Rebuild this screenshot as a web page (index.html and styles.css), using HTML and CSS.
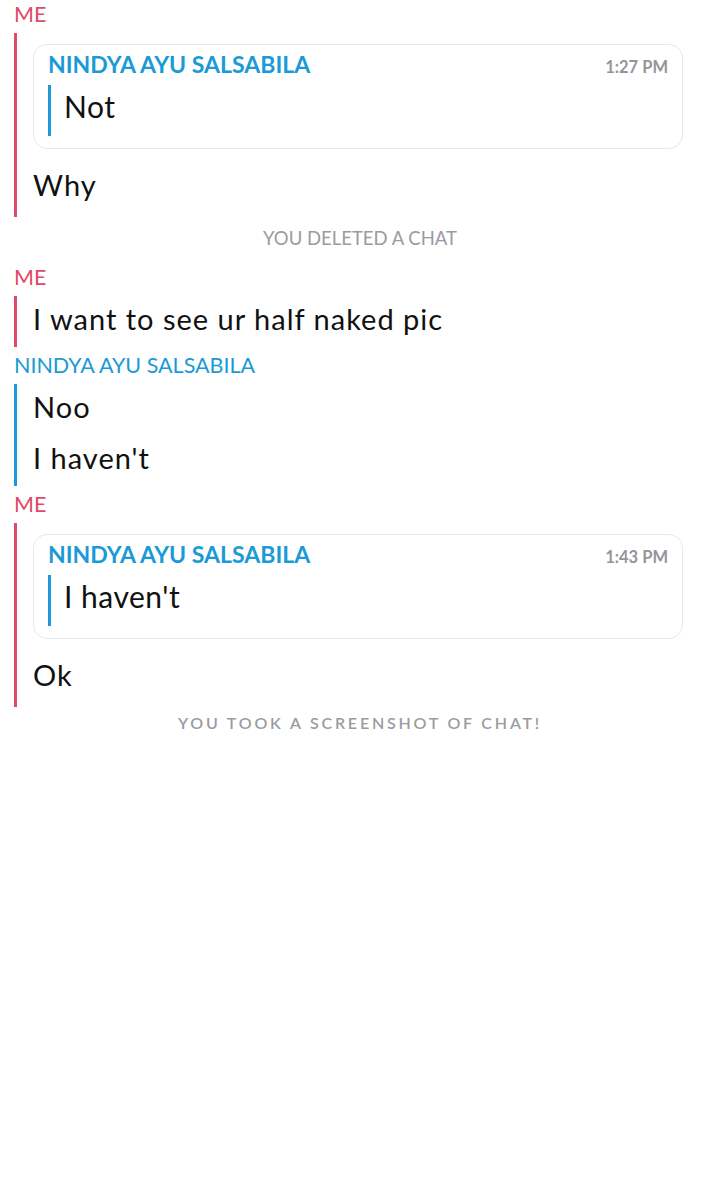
FILE: index.html
```html
<!DOCTYPE html>
<html lang="en">
<head>
    <meta charset="UTF-8">
    <meta name="viewport" content="width=device-width, initial-scale=1.0">
    <title>Chat</title>
    <link rel="stylesheet" href="styles.css">
</head>
<body>
    <div class="chat">
        <!-- Me, replying to a quote -->
        <div class="sender me">ME</div>
        <div class="thread me has-quote">
            <div class="quote-card">
                <div class="quote-head">
                    <span class="quote-name">NINDYA AYU SALSABILA</span>
                    <span class="quote-time">1:27 PM</span>
                </div>
                <div class="quote-text">Not</div>
            </div>
            <div class="msg">Why</div>
        </div>

        <div class="notice">YOU DELETED A CHAT</div>

        <div class="sender me">ME</div>
        <div class="thread me">
            <div class="msg">I want to see ur half naked pic</div>
        </div>

        <div class="sender them">NINDYA AYU SALSABILA</div>
        <div class="thread them">
            <div class="msg">Noo</div>
            <div class="msg">I haven't</div>
        </div>

        <div class="sender me">ME</div>
        <div class="thread me has-quote">
            <div class="quote-card">
                <div class="quote-head">
                    <span class="quote-name">NINDYA AYU SALSABILA</span>
                    <span class="quote-time">1:43 PM</span>
                </div>
                <div class="quote-text">I haven't</div>
            </div>
            <div class="msg">Ok</div>
        </div>

        <div class="notice screenshot">YOU TOOK A SCREENSHOT OF CHAT!</div>
    </div>
</body>
</html>
```

FILE: styles.css
```css
body {
    margin: 0;
    background: #ffffff;
    font-family: Lato, "Open Sans", sans-serif;
    color: #111111;
}
.chat {
    margin-top: -4px;
    padding-right: 37px;
}
.sender {
    padding-left: 14px;
    font-size: 21.5px;
    line-height: 37px;
}
.sender.me {
    color: #df4a66;
}
.sender.them {
    color: #1a9ad6;
}
.thread {
    margin-left: 14px;
    padding-left: 16px;
    border-left: 3px solid;
}
.thread.me {
    border-color: #df4a66;
}
.thread.them {
    border-color: #1a9ad6;
}
.thread.has-quote {
    padding-top: 11px;
    padding-bottom: 4px;
}
.msg {
    font-size: 29px;
    letter-spacing: 1px;
    line-height: 45px;
    padding-bottom: 6px;
}
.quote-card {
    margin-bottom: 13px;
    padding: 7px 14px 12px;
    border: 1px solid #e6e7ea;
    border-radius: 14px;
}
.quote-head {
    display: flex;
    justify-content: space-between;
    align-items: baseline;
    line-height: 24px;
    margin-bottom: 6px;
}
.quote-name {
    color: #1a9ad6;
    font-size: 23px;
    font-weight: bold;
}
.quote-time {
    color: #94959a;
    font-size: 16.5px;
    font-weight: bold;
}
.quote-text {
    border-left: 3px solid #1a9ad6;
    padding-left: 13px;
    padding-bottom: 8px;
    font-size: 30px;
    letter-spacing: 0.5px;
    line-height: 43px;
}
.notice {
    text-align: center;
    color: #9a9ba0;
    font-size: 18.5px;
    line-height: 42px;
    margin-right: -37px;
}
.notice.screenshot {
    font-size: 16px;
    font-weight: 600;
    letter-spacing: 2.8px;
    line-height: 32px;
    padding-bottom: 4px;
}
```
